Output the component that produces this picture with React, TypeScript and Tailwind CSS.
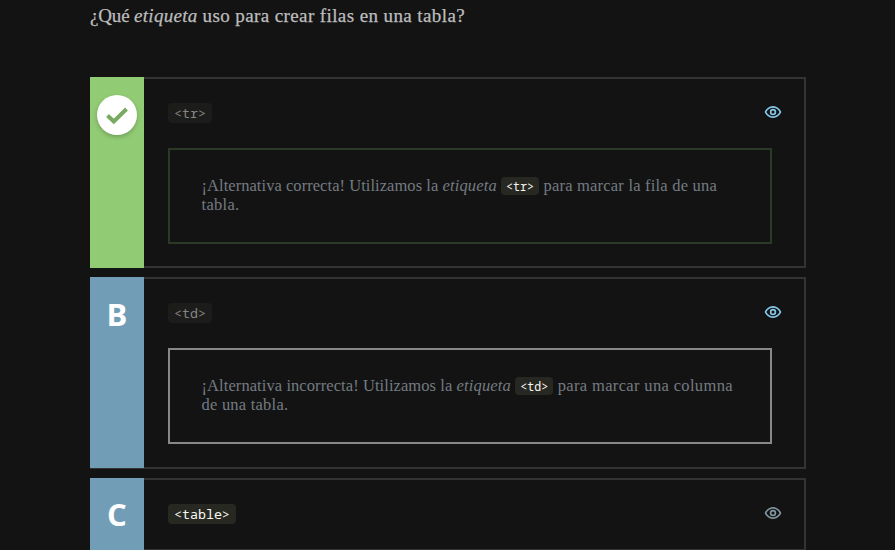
import type { ReactNode } from "react";

function Eye({ className }: { className: string }) {
  return (
    <svg viewBox="0 0 24 24" className={`h-[18px] w-[18px] ${className}`} fill="currentColor" aria-hidden="true">
      <path d="M12 4C5.8 4 1 10.2 1 12s4.800 8 11 8 11-6.200 11-8S18.200 4 12 4Zm0 2.200c4.700 0 8.600 4.500 8.600 5.800s-3.900 5.800-8.600 5.800S3.400 13.300 3.400 12 7.300 6.200 12 6.200Z" />
      <path fillRule="evenodd" d="M12 7.700a4.300 4.300 0 1 0 0 8.600 4.300 4.300 0 0 0 0-8.600Zm0 2.200a2.100 2.100 0 1 1 0 4.200 2.100 2.100 0 0 1 0-4.200Z" />
    </svg>
  );
}

function Check() {
  return (
    <span className="flex h-10 w-10 items-center justify-center rounded-full bg-white shadow-[0_2px_4px_rgba(0,0,0,0.22)]">
      <svg viewBox="0 0 22 18" className="mt-px h-[18px] w-[22px]" fill="none" aria-hidden="true">
        <path d="M1.500 8.500 7.800 14.500 20.500 2" stroke="#78aa60" strokeWidth="4" />
      </svg>
    </span>
  );
}

type OptionProps = {
  mark: ReactNode;
  markColor: string;
  code: string;
  codeColor: string;
  eyeColor: string;
  height: string;
  children?: ReactNode;
};

function Option({ mark, markColor, code, codeColor, eyeColor, height, children }: OptionProps) {
  return (
    <li className={`flex w-[716px] shrink-0 ${height}`}>
      <div className={`flex w-[54px] shrink-0 justify-center ${markColor}`}>{mark}</div>
      <div className="flex-1 border-2 border-l-0 border-[#333] pl-6">
        <div className="flex h-[69px] items-start justify-between pt-6 pr-[22px]">
          <code className={`flex h-5 items-center rounded px-1.5 font-['Noto_Sans_Mono','DejaVu_Sans_Mono',monospace] text-[13.300px] leading-5 ${codeColor}`}>
            {code}
          </code>
          <Eye className={eyeColor} />
        </div>
        {children}
      </div>
    </li>
  );
}

function Tag({ children }: { children: string }) {
  return (
    <code className="-my-1 inline-block h-[18px] rounded bg-[#272822] px-[5px] font-['Noto_Sans_Mono','DejaVu_Sans_Mono',monospace] text-[11.700px] leading-[19px] tracking-normal text-[#f8f8f2]">
      {children}
    </code>
  );
}

function Letter({ children }: { children: string }) {
  return <span className="font-['Open_Sans',sans-serif] text-[31px] leading-10 font-bold text-white">{children}</span>;
}

export default function App() {
  return (
    <main className="h-[550px] overflow-hidden bg-[#131313] pl-[90px] font-['Source_Serif_Pro','Liberation_Serif',serif]">
      <h1 className="h-[77px] pt-1 text-[19px] leading-6 font-normal whitespace-nowrap text-[#bdbdbd] [-webkit-text-stroke:0.250px_#bdbdbd]">
        <span className="tracking-[-0.150px]">¿Qué </span>
        <em className="tracking-[0.270px]">etiqueta </em>
        <span className="tracking-[0.400px]">uso para crear filas en una tabla?</span>
      </h1>
      <ul>
        <Option mark={<Check />} markColor="bg-[#91cb74] pt-[18px]" code="<tr>" codeColor="bg-[#1c1c1a] text-[#878785]" eyeColor="text-[#83c5e8]" height="mb-[9px] h-[191px]">
          <div className="h-24 w-[604px] border-2 border-[#2b3a24] pt-[26px] pl-[31.500px] text-[16.500px] leading-[19px] whitespace-nowrap text-[#737b82]">
            <p>
              <span className="tracking-[0.050px]">¡Alternativa correcta! Utilizamos la </span>
              <em className="tracking-[0.140px]">etiqueta </em>
              <Tag>{"<tr>"}</Tag>
              <span className="tracking-[0.210px]"> para marcar la fila de una</span>
              <br />
              <span className="tracking-[0.300px]">tabla.</span>
            </p>
          </div>
        </Option>
        <Option mark={<Letter>B</Letter>} markColor="border-b border-[#333] bg-[#719eb6] pt-[17px]" code="<td>" codeColor="bg-[#1c1c1a] text-[#878785]" eyeColor="text-[#83c5e8]" height="mb-[9px] h-[192px]">
          <div className="h-24 w-[604px] border-2 border-[#888] pt-[26px] pl-[31.500px] text-[16.500px] leading-[19px] whitespace-nowrap text-[#737b82]">
            <p>
              <span className="tracking-[0.080px]">¡Alternativa incorrecta! Utilizamos la </span>
              <em className="tracking-[0.140px]">etiqueta </em>
              <Tag>{"<td>"}</Tag>
              <span className="tracking-[0.350px]"> para marcar una columna</span>
              <br />
              <span className="tracking-[0.230px]">de una tabla.</span>
            </p>
          </div>
        </Option>
        <Option mark={<Letter>C</Letter>} markColor="bg-[#719eb6] pt-4" code="<table>" codeColor="bg-[#272822] text-[#f8f8f2]" eyeColor="text-[#80959f]" height="h-[73px]" />
      </ul>
    </main>
  );
}
